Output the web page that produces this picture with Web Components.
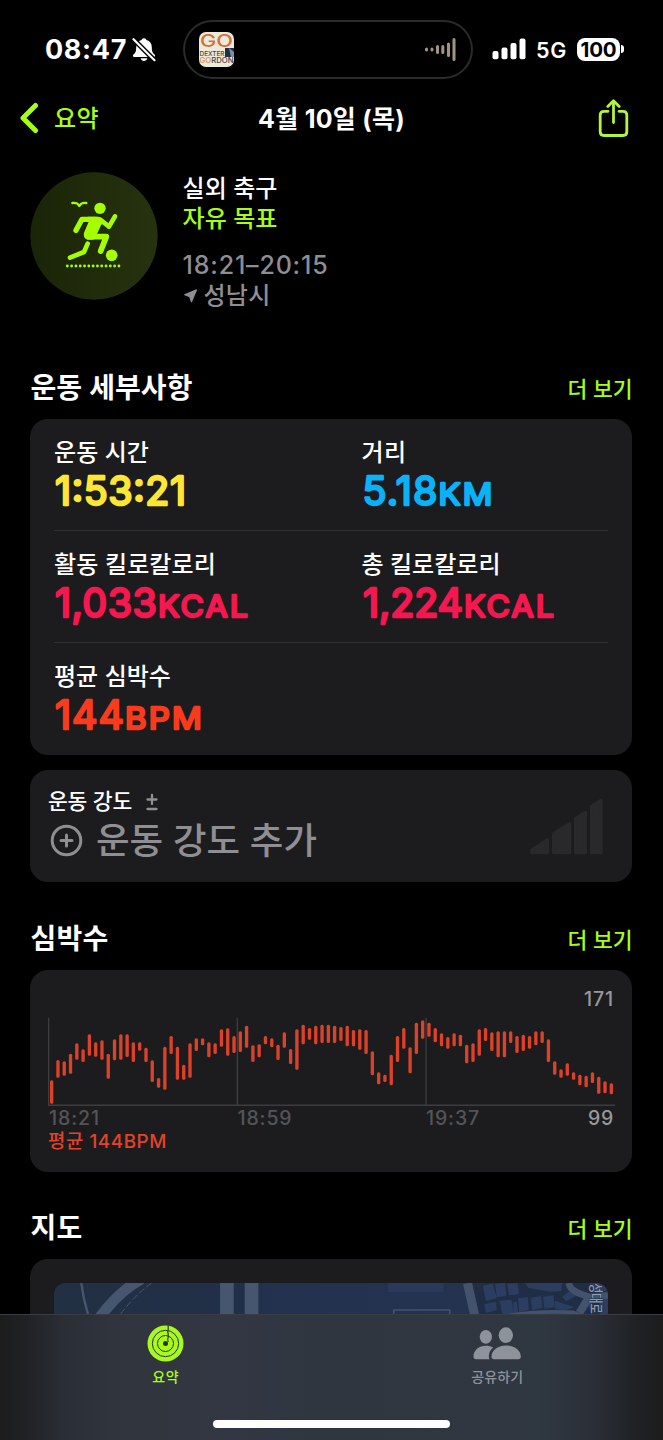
<!DOCTYPE html>
<html lang="ko">
<head>
<meta charset="utf-8">
<title>운동 요약</title>
<style>
  body {
    margin: 0;
    background: #000;
    color: #fff;
    font-family: Inter, "Noto Sans CJK KR", sans-serif;
    font-weight: 500;
    --green: #a6ff12;
    --card: #1c1c1e;
    --gray: #8e8e93;
  }
</style>
</head>
<body>
<workout-page></workout-page>

<script>
// One line of text, spaced out or in to an exact width
class FitText extends HTMLElement {
  constructor() {
    super();
    this.shadowDOM = this.attachShadow({ mode: "open" });
  }

  connectedCallback() {
    this.shadowDOM.innerHTML = `
      <style>
        :host { display: block; white-space: nowrap; flex: none; }
        span { display: inline-block; }
      </style>
      <span><slot></slot></span>
    `;
    const target = Number(this.getAttribute("width"));
    const natural = this.shadowDOM.querySelector("span").getBoundingClientRect().width;
    const count = this.textContent.length;
    this.style.width = target + "px";
    this.style.letterSpacing = (target - natural) / count + "px";
  }
}

class StatusBar extends HTMLElement {
  constructor() {
    super();
    this.shadowDOM = this.attachShadow({ mode: "open" });
  }

  connectedCallback() {
    this.shadowDOM.innerHTML = `
      <style>
        :host {
          display: flex;
          align-items: center;
          height: 98px;
          box-sizing: border-box;
          padding-left: 45px;
        }
        .time { font-size: 27px; font-weight: 700; line-height: 30px; margin-top: 2px; }
        .bell { margin-left: 5px; }
        .island {
          display: flex;
          align-items: center;
          justify-content: space-between;
          box-sizing: border-box;
          width: 290px;
          height: 59px;
          margin-left: 27px;
          padding: 0 14px 0 14px;
          border: 2px solid #2b2b2b;
          border-radius: 30px;
        }
        .signal { margin-left: 19px; }
        .net { font-size: 21.5px; font-weight: 600; line-height: 30px; margin: 1px 0 0 10px; }
        .battery {
          display: flex;
          align-items: center;
          justify-content: center;
          width: 43px;
          height: 23px;
          margin-left: 10px;
          border-radius: 8px;
          background: #fff;
          color: #000;
          font-size: 20.5px;
          font-weight: 700;
        }
        .nub { width: 3px; height: 8px; margin-left: 1px; border-radius: 0 4px 4px 0; background: #fff; }
        svg { display: block; flex: none; }
      </style>
      <fit-text class="time" width="82">08:47</fit-text>
      <svg class="bell" width="24" height="25" viewBox="0 0 24 25">
        <path d="M12 1.200c-1.400 0-2.200.8-2.500 1.900C5.900 4.200 4.200 6.800 4.200 10.300c0 4.500-1 5.800-2.800 7.300-.9.800-.5 2.400.7 2.400h19.800c1.200 0 1.600-1.600.7-2.400-1.800-1.500-2.800-2.800-2.800-7.300 0-3.500-1.700-6.100-5.300-7.200C14.200 2 13.400 1.200 12 1.200z" fill="#fff"/>
        <path d="M8.600 21.300h6.800c-.5 1.800-1.800 2.700-3.400 2.700s-2.900-.9-3.400-2.700z" fill="#fff"/>
        <path d="M1.500 2.200L22.800 23.500" stroke="#000" stroke-width="5"/>
        <path d="M1.500 2.200L22.500 23.200" stroke="#fff" stroke-width="2.200" stroke-linecap="round"/>
      </svg>
      <div class="island">
        <svg width="35" height="35" viewBox="0 0 35 35" font-family="Inter, sans-serif">
          <rect width="35" height="35" rx="7" fill="#eeeadb"/>
          <text x="1" y="14.500" font-size="17" font-weight="500" fill="#d2703c" textLength="33" lengthAdjust="spacingAndGlyphs">GO</text>
          <rect x="26" y="16" width="9" height="9" fill="#25303f"/>
          <path d="M30 16l5 4v5h-3z" fill="#7792a6"/>
          <text x="0.500" y="24.300" font-size="6.500" font-weight="500" fill="#444" textLength="25" lengthAdjust="spacingAndGlyphs">DEXTER</text>
          <text x="0.500" y="30.500" font-size="7" font-weight="500" fill="#444" textLength="34" lengthAdjust="spacingAndGlyphs"><tspan fill="#d98a4e">GO</tspan>RDON</text>
        </svg>
        <svg width="33" height="25" viewBox="0 0 33 25" stroke="#a39383" stroke-width="3" stroke-linecap="round">
          <path d="M2.500 12v1M8 12v1M13.500 9.500v6M18.800 9.500v6M24.500 7v11.500M30 2.500v20"/>
        </svg>
      </div>
      <svg class="signal" width="34" height="22" viewBox="0 0 34 22" fill="#fff">
        <rect x="0.500" y="13" width="6" height="8.300" rx="2"/>
        <rect x="9.500" y="9.500" width="6" height="11.800" rx="2"/>
        <rect x="18.500" y="5" width="6" height="16.300" rx="2"/>
        <rect x="27.500" y="0.500" width="6" height="20.800" rx="2"/>
      </svg>
      <fit-text class="net" width="31">5G</fit-text>
      <div class="battery"><fit-text width="36">100</fit-text></div>
      <div class="nub"></div>
    `;
  }
}

class NavBar extends HTMLElement {
  constructor() {
    super();
    this.shadowDOM = this.attachShadow({ mode: "open" });
  }

  connectedCallback() {
    this.shadowDOM.innerHTML = `
      <style>
        :host {
          display: grid;
          grid-template-columns: 1fr auto 1fr;
          align-items: center;
          height: 40px;
          padding: 0 34px 0 19px;
          line-height: 30px;
        }
        .back { display: flex; align-items: center; color: var(--green); font-size: 24px; }
        .back fit-text { margin: 2px 0 0 14px; }
        .title { font-size: 25px; font-weight: 700; margin: 1px 0 0 15px; }
        .share { justify-self: end; }
        svg { display: block; }
      </style>
      <div class="back">
        <svg width="21" height="32" viewBox="0 0 21 32" fill="none" stroke="currentColor" stroke-width="5" stroke-linecap="round" stroke-linejoin="round">
          <path d="M16.500 3.500L4 16l12.500 12.500"/>
        </svg>
        <fit-text width="45">요약</fit-text>
      </div>
      <fit-text class="title" width="147">4월 10일 (목)</fit-text>
      <svg class="share" width="31" height="39" viewBox="0 0 31 39" fill="none" stroke="#b2f43f" stroke-width="2.800" stroke-linecap="round" stroke-linejoin="round">
        <path d="M10 12.300H6q-3.800 0-3.800 3.800v16.600q0 3.800 3.800 3.800h19q3.800 0 3.800-3.800V16.100q0-3.800-3.800-3.800h-4M15.500 23.500V2.500M9.800 7.500l5.700-5.700L21.200 7.500"/>
      </svg>
    `;
  }
}

class WorkoutHeader extends HTMLElement {
  constructor() {
    super();
    this.shadowDOM = this.attachShadow({ mode: "open" });
  }

  connectedCallback() {
    const dots = Array.from({ length: 13 }, (_, i) => `<circle cx="${(203 + i * 12.9).toFixed(1)}" cy="349" r="4.300"/>`).join("");

    this.shadowDOM.innerHTML = `
      <style>
        :host {
          display: flex;
          height: 182px;
          padding: 34px 0 0 30px;
          box-sizing: border-box;
        }
        .badge { display: block; flex: none; margin-right: 24.500px; }
        .lines { font-size: 24px; line-height: 30px; padding-top: 1.500px; }
        .goal { color: var(--green); }
        .when { color: var(--gray); font-size: 25px; margin-top: 16px; }
        .where { display: flex; align-items: center; color: var(--gray); margin-top: 1px; }
        .where svg { margin: 1px 6px 0 1px; }
      </style>
      <svg class="badge" width="128" height="128" viewBox="91 67 384 384">
        <defs>
          <linearGradient id="disc"><stop stop-color="#1a2407"/><stop offset="1" stop-color="#27330f"/></linearGradient>
        </defs>
        <circle cx="283" cy="259" r="191" fill="url(#disc)"/>
        <g fill="none" stroke="#a6ff00" stroke-linecap="round" stroke-linejoin="round">
          <path d="M218 160c8-1 17 0 21 9 4-9 13-10 21-9" stroke-width="7"/>
          <path d="M290 209h-43l-18 33" stroke-width="16"/>
          <path d="M303 211l25 20 18-31" stroke-width="14"/>
          <path d="M268 261h52l-17 43" stroke-width="17"/>
          <path d="M264 282l-11 25-42 17" stroke-width="14"/>
        </g>
        <g fill="#a6ff00">
          <path d="M264 201h33q9 1 14 9l2 7-9 10-13 28-10 15h-17q-15-4-11-21l16-37z"/>
          <circle cx="301" cy="176" r="17"/>
          <circle cx="336" cy="317" r="17.500"/>
          ${dots}
        </g>
      </svg>
      <div class="lines">
        <fit-text width="95">실외 축구</fit-text>
        <fit-text class="goal" width="95">자유 목표</fit-text>
        <fit-text class="when" width="146">18:21–20:15</fit-text>
        <div class="where">
          <svg width="14" height="14" viewBox="0 0 14 14"><path d="M0.700 5.700L12.400 0.900 7.500 12.800 5.800 7.800z" fill="currentColor" stroke="currentColor" stroke-width="1.200" stroke-linejoin="round"/></svg>
          <fit-text width="67">성남시</fit-text>
        </div>
      </div>
    `;
  }
}

// Section heading with its "more" link, the cards go in the slot
class PageSection extends HTMLElement {
  constructor() {
    super();
    this.shadowDOM = this.attachShadow({ mode: "open" });
  }

  connectedCallback() {
    this.shadowDOM.innerHTML = `
      <style>
        :host { display: block; padding: 0 31px 0 30px; }
        header { display: flex; justify-content: space-between; height: 68px; padding-left: 0.500px; margin-right: -0.500px; }
        .title { font-size: 28px; font-weight: 600; line-height: 74px; }
        .more { font-size: 21.500px; font-weight: 500; line-height: 77px; color: var(--green); }
      </style>
      <header>
        <fit-text class="title" width="${this.getAttribute("title-width")}">${this.getAttribute("heading")}</fit-text>
        <fit-text class="more" width="65">더 보기</fit-text>
      </header>
      <slot></slot>
    `;
  }
}

class InfoCard extends HTMLElement {
  constructor() {
    super();
    this.shadowDOM = this.attachShadow({ mode: "open" });
  }

  connectedCallback() {
    this.shadowDOM.innerHTML = `
      <style>
        :host {
          display: block;
          box-sizing: border-box;
          background: var(--card);
          border-radius: 18px;
          overflow: hidden;
        }
      </style>
      <slot></slot>
    `;
  }
}

class MetricItem extends HTMLElement {
  constructor() {
    super();
    this.shadowDOM = this.attachShadow({ mode: "open" });
  }

  connectedCallback() {
    const [value, valueX, valueWidth] = this.getAttribute("value").split("|");
    const [unit, unitX, unitWidth] = (this.getAttribute("unit") || "").split("|");
    const unitText = unit
      ? `<text class="unit" x="${unitX}" y="38" textLength="${unitWidth}" lengthAdjust="spacingAndGlyphs">${unit}</text>`
      : "";

    // the round joined stroke softens the corners of the figures
    this.shadowDOM.innerHTML = `
      <style>
        :host { display: block; height: 111px; padding-top: 18px; box-sizing: border-box; font-size: 24px; line-height: 31px; }
        svg { display: block; overflow: visible; margin-top: -1px; }
        text {
          fill: var(--tone);
          stroke: var(--tone);
          stroke-width: 2.400;
          stroke-linejoin: round;
          font-size: 39.500px;
          font-weight: 400;
        }
        .unit { font-size: 30px; letter-spacing: 2px; }
      </style>
      <fit-text width="${this.getAttribute("label-width")}">${this.getAttribute("label")}</fit-text>
      <svg width="240" height="50">
        <text x="${valueX}" y="38" textLength="${valueWidth}">${value}</text>${unitText}
      </svg>
    `;
  }
}

class MetricGrid extends HTMLElement {
  constructor() {
    super();
    this.shadowDOM = this.attachShadow({ mode: "open" });
  }

  connectedCallback() {
    this.shadowDOM.innerHTML = `
      <style>
        :host { display: block; padding: 0 24px; height: 335.500px; box-sizing: border-box; }
        .row { display: grid; grid-template-columns: 307.500px 1fr; }
        .row + .row { border-top: 1px solid #303033; }
      </style>
      <div class="row">
        <metric-item label="운동 시간" label-width="95" value="1:53:21|1|131" style="--tone: #ffe635"></metric-item>
        <metric-item label="거리" label-width="45" value="5.18|0.500|75" unit="KM|76.500|56" style="--tone: #0ab2f8"></metric-item>
      </div>
      <div class="row">
        <metric-item label="활동 킬로칼로리" label-width="162" value="1,033|1|102" unit="KCAL|104|92" style="--tone: #f5174f"></metric-item>
        <metric-item label="총 킬로칼로리" label-width="139" value="1,224|1|100" unit="KCAL|102|92" style="--tone: #f5174f"></metric-item>
      </div>
      <div class="row">
        <metric-item label="평균 심박수" label-width="117" value="144|1|69" unit="BPM|71|79" style="--tone: #f93b1d"></metric-item>
      </div>
    `;
  }
}

class EffortRow extends HTMLElement {
  constructor() {
    super();
    this.shadowDOM = this.attachShadow({ mode: "open" });
  }

  connectedCallback() {
    this.shadowDOM.innerHTML = `
      <style>
        :host {
          display: flex;
          justify-content: space-between;
          height: 112px;
          box-sizing: border-box;
          padding: 16px 29px 0 18px;
        }
        .label, .add { display: flex; align-items: center; }
        .label { font-size: 21.500px; line-height: 30px; }
        .label svg { margin: 1px 0 0 14px; }
        .add { font-size: 36.500px; line-height: 46px; color: var(--gray); }
        .add fit-text { margin-top: 2px; }
        .add svg { margin: 0 13px 0 2px; }
        .steps { margin-top: 12px; }
        svg { display: block; flex: none; }
      </style>
      <div>
        <div class="label">
          <fit-text width="84">운동 강도</fit-text>
          <svg width="12" height="18" viewBox="0 0 12 18" stroke="#8e8e93" stroke-width="2.300" stroke-linecap="round"><path d="M6 2v9M1.500 6.500h9M1.500 16h9"/></svg>
        </div>
        <div class="add">
          <svg width="33" height="33" viewBox="0 0 33 33" fill="none" stroke="currentColor" stroke-width="3" stroke-linecap="round"><circle cx="16.500" cy="16.500" r="14.300"/><path d="M16.500 11v11M11 16.500h11"/></svg>
          <fit-text width="221">운동 강도 추가</fit-text>
        </div>
      </div>
      <svg class="steps" width="73" height="57" viewBox="597 143 219 171" fill="#29292c" stroke="#29292c" stroke-width="10" stroke-linejoin="round">
        <path d="M603 300l46-32v39h-46zM668 250l48-30v87h-48zM734 204l29-18v121h-29zM782 168l28-18v157h-28z"/>
      </svg>
    `;
  }
}

class HeartChart extends HTMLElement {
  constructor() {
    super();
    this.shadowDOM = this.attachShadow({ mode: "open" });
  }

  // top and bottom of each range bar, in thirds of a pixel
  get ranges() {
    return [
      [360, 430], [299, 352], [303, 346], [280, 340], [249, 298], [267, 305], [222, 286], [246, 289], [240, 298], [280, 355],
      [237, 300], [222, 298], [222, 290], [246, 305], [246, 271], [262, 305], [300, 365], [353, 382], [259, 388], [227, 281],
      [259, 358], [313, 358], [249, 352], [234, 272], [234, 255], [246, 291], [249, 281], [207, 259], [204, 286], [227, 278],
      [213, 275], [196, 262], [255, 305], [252, 291], [227, 252], [234, 261], [253, 299], [216, 262], [266, 311], [207, 328],
      [193, 252], [203, 238], [196, 252], [193, 248], [193, 248], [196, 248], [200, 242], [196, 258], [209, 258], [207, 268],
      [209, 281], [273, 345], [336, 372], [343, 365], [283, 375], [227, 305], [203, 265], [261, 339], [187, 281], [180, 235],
      [187, 229], [203, 246], [219, 258], [230, 265], [219, 258], [223, 258], [253, 309], [249, 305], [207, 286], [203, 242],
      [216, 272], [213, 291], [213, 291], [213, 248], [227, 278], [223, 272], [227, 265], [213, 255], [213, 248], [237, 305],
      [303, 343], [327, 352], [309, 346], [336, 358], [343, 375], [346, 381], [336, 368], [349, 400], [363, 399], [369, 402]
    ];
  }

  connectedCallback() {
    const bars = this.ranges.map(([top, bottom], i) =>
      `<rect x="${(60 + i * 18.865).toFixed(1)}" y="${top}" width="10" height="${bottom - top}" rx="4.500"/>`
    ).join("");

    this.shadowDOM.innerHTML = `
      <style>
        :host { display: block; height: 202px; box-sizing: border-box; padding: 17px 18px 0 18px; font-size: 19.500px; line-height: 24px; }
        .max { display: flex; justify-content: flex-end; color: #98989d; }
        svg { display: block; margin-top: 6px; }
        .times { display: grid; grid-template-columns: 188.500px 188.500px 1fr auto; color: #545458; padding-left: 1px; }
        .times .min { color: #98989d; }
        .average { color: #e2432a; font-size: 18.800px; line-height: 23px; }
      </style>
      <div class="max"><fit-text width="30">171</fit-text></div>
      <svg width="567" height="89.500" viewBox="54 170 1701 268.500">
        <g fill="none" stroke="#3d3d40" stroke-width="4"><path d="M56 172v263M622 172v263M1188 172v263"/><path d="M54 435h1701" stroke-width="5"/></g>
        <g fill="#dc4229">${bars}</g>
      </svg>
      <div class="times">
        <fit-text width="51">18:21</fit-text>
        <fit-text width="55">18:59</fit-text>
        <fit-text width="54">19:37</fit-text>
        <fit-text class="min" width="26">99</fit-text>
      </div>
      <fit-text class="average" width="119">평균 144BPM</fit-text>
    `;
  }
}

class RouteMap extends HTMLElement {
  constructor() {
    super();
    this.shadowDOM = this.attachShadow({ mode: "open" });
  }

  connectedCallback() {
    this.shadowDOM.innerHTML = `
      <style>
        :host { display: block; padding: 24px 24px 0 24px; }
        .map { border-radius: 12px; overflow: hidden; background: #22304a; }
        svg { display: block; }
      </style>
      <div class="map">
        <svg width="554" height="160" viewBox="162 250 1663 480">
          <defs>
            <linearGradient id="land"><stop stop-color="#213042"/><stop offset=".35" stop-color="#21304a"/><stop offset=".42" stop-color="#233250"/><stop offset="1" stop-color="#24334c"/></linearGradient>
          </defs>
          <rect x="162" y="250" width="1663" height="480" fill="url(#land)"/>
          <g fill="none" stroke="#47566f">
            <path d="M244 250q6 50 22 100" stroke-width="7"/>
            <path d="M425 238q-66 34-128 118" stroke-width="32"/>
            <path d="M455 250q-50 35-100 102" stroke-width="3" stroke-dasharray="20 8"/>
            <path d="M681 250v110M755 250v110" stroke-width="41"/>
          </g>
          <path d="M1165 250h166v27h-166z" fill="#2a3a5b"/>
          <path d="M1182 350v-19h168v19" fill="none" stroke="#43536d" stroke-width="5"/>
          <path d="M1420 250h405v110H1440z" fill="#202e45"/>
          <g fill="#2b3d60">
            <path d="M1449 258l30-7 12 44-32 9zM1486 252l30-2 4 38-29 5zM1522 252l32-2 4 34-30 3z"/>
            <path d="M1577 250h112l-5 24-28 2-70-11z"/>
            <path d="M1453 314l36-8 2 26-32 7zM1499 303l36-3 9 42-35 5zM1540 307l11-1 4 34-11 2zM1555 296l30-3 2 38-29 6zM1593 294l31-5 4 36-31 6zM1630 292l31-5 4 36-31 4zM1665 303l60 20-30 9-28-3zM1687 291l25-18 21 14-33 18z"/>
            <path d="M1768 250h57v24h-38zM1758 315l20-20v35zM1800 300l25-4v50h-25z"/>
          </g>
          <g fill="none" stroke="#43536d">
            <path d="M1403 250l25 110" stroke-width="27"/>
            <path d="M1707 250q4 20 30 30l32 12 56-5" stroke-width="20"/>
            <path d="M1768 292l-29 48" stroke-width="24"/>
            <path d="M1530 347q90-14 190-9l50 20" stroke-width="11"/>
          </g>
          <text transform="translate(1775 250) rotate(90)" font-size="40" fill="#8d9ab0" font-weight="500" stroke="#22304a" stroke-width="3" paint-order="stroke" textLength="92" lengthAdjust="spacingAndGlyphs">성대로</text>
        </svg>
      </div>
    `;
  }
}

class TabBar extends HTMLElement {
  constructor() {
    super();
    this.shadowDOM = this.attachShadow({ mode: "open" });
  }

  connectedCallback() {
    this.shadowDOM.innerHTML = `
      <style>
        :host {
          display: flex;
          flex-direction: column;
          flex: none;
          height: 126px;
          box-sizing: border-box;
          border-top: 1px solid #393d43;
          background: linear-gradient(90deg, #1c1c1d 0, #202225 28px, #2a2e35 62px, #2f343d 110px, #30353e 160px, #323743 225px, #2f363f 330px, #2f3741 540px, #2b3038 590px, #202225 634px, #1c1c1d 663px);
        }
        .tabs { display: grid; grid-template-columns: 1fr 1fr; height: 105px; }
        .tab {
          display: flex;
          flex-direction: column;
          align-items: center;
          color: #8d929b;
          font-size: 14px;
          line-height: 20px;
          padding-top: 10px;
        }
        .active { color: var(--green); }
        .tab svg { display: block; height: 37px; margin-bottom: 5px; }
        .home { width: 237px; height: 8px; border-radius: 4px; background: #fff; align-self: center; }
      </style>
      <div class="tabs">
        <div class="tab active">
          <svg width="37" viewBox="441.500 373.500 111 111">
            <circle cx="497" cy="429" r="54" fill="#a8f91e"/>
            <g fill="none" stroke="#29351f" stroke-width="3">
              <circle cx="497" cy="429" r="39.500"/>
              <circle cx="497" cy="429" r="24"/>
              <path d="M505 374v16q-3 4 0 9v12q-3 4 0 14" stroke-width="3.500"/>
            </g>
            <circle cx="497" cy="429" r="7.500" fill="#29351f"/>
          </svg>
          <fit-text width="27">요약</fit-text>
        </div>
        <div class="tab">
          <svg width="48" viewBox="426.500 373.500 144 111" fill="currentColor">
            <ellipse cx="465" cy="409" rx="18.500" ry="20.500"/>
            <ellipse cx="525" cy="404" rx="21.500" ry="23.500"/>
            <path d="M436 476q-8 0-8-8c0-18 16-32 37-32 8 0 16 2 22 5-9 8-13 16-13 27q0 4 2 8z"/>
            <path d="M490 476q-8 0-8-8c0-18 18-33 43-33s45 15 45 33q0 8-8 8z"/>
          </svg>
          <fit-text width="52">공유하기</fit-text>
        </div>
      </div>
      <div class="home"></div>
    `;
  }
}

class WorkoutPage extends HTMLElement {
  constructor() {
    super();
    this.shadowDOM = this.attachShadow({ mode: "open" });
  }

  connectedCallback() {
    this.shadowDOM.innerHTML = `
      <style>
        :host { display: flex; flex-direction: column; width: 663px; height: 1440px; overflow: hidden; }
        main { flex: 1; min-height: 0; overflow: hidden; }
        info-card + info-card { margin-top: 15.500px; }
        .details { margin-top: 31px; }
        .heart { margin-top: 19.500px; }
        .route { margin-top: 19.500px; }
      </style>
      <main>
        <status-bar></status-bar>
        <nav-bar></nav-bar>
        <workout-header></workout-header>
        <page-section class="details" heading="운동 세부사항" title-width="162">
          <info-card><metric-grid></metric-grid></info-card>
          <info-card><effort-row></effort-row></info-card>
        </page-section>
        <page-section class="heart" heading="심박수" title-width="78">
          <info-card><heart-chart></heart-chart></info-card>
        </page-section>
        <page-section class="route" heading="지도" title-width="52">
          <info-card><route-map></route-map></info-card>
        </page-section>
      </main>
      <tab-bar></tab-bar>
    `;
  }
}

customElements.define("status-bar", StatusBar);
customElements.define("nav-bar", NavBar);
customElements.define("workout-header", WorkoutHeader);
customElements.define("page-section", PageSection);
customElements.define("info-card", InfoCard);
customElements.define("metric-item", MetricItem);
customElements.define("metric-grid", MetricGrid);
customElements.define("effort-row", EffortRow);
customElements.define("heart-chart", HeartChart);
customElements.define("route-map", RouteMap);
customElements.define("tab-bar", TabBar);
customElements.define("workout-page", WorkoutPage);
customElements.define("fit-text", FitText);
</script>
</body>
</html>
